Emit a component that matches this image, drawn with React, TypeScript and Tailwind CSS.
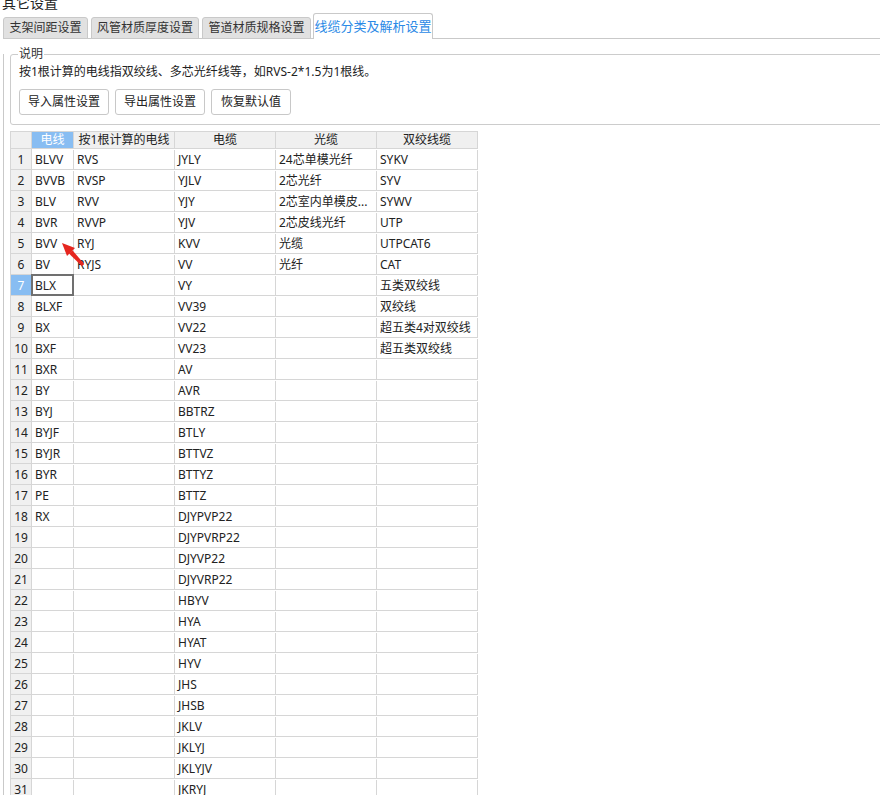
import React from 'react';

const col1 = ['BLVV', 'BVVB', 'BLV', 'BVR', 'BVV', 'BV', 'BLX', 'BLXF', 'BX', 'BXF', 'BXR', 'BY', 'BYJ', 'BYJF', 'BYJR', 'BYR', 'PE', 'RX'];
const col2 = ['RVS', 'RVSP', 'RVV', 'RVVP', 'RYJ', 'RYJS'];
const col3 = [
  'JYLY', 'YJLV', 'YJY', 'YJV', 'KVV', 'VV', 'VY', 'VV39', 'VV22', 'VV23', 'AV', 'AVR', 'BBTRZ', 'BTLY', 'BTTVZ', 'BTTYZ',
  'BTTZ', 'DJYPVP22', 'DJYPVRP22', 'DJYVP22', 'DJYVRP22', 'HBYV', 'HYA', 'HYAT', 'HYV', 'JHS', 'JHSB', 'JKLV', 'JKLYJ', 'JKLYJV', 'JKRYJ',
];
const col4 = ['24芯单模光纤', '2芯光纤', '2芯室内单模皮...', '2芯皮线光纤', '光缆', '光纤'];
const col5 = ['SYKV', 'SYV', 'SYWV', 'UTP', 'UTPCAT6', 'CAT', '五类双绞线', '双绞线', '超五类4对双绞线', '超五类双绞线'];

const tabs = [
  { label: '支架间距设置', cls: 'w-[85px]' },
  { label: '风管材质厚度设置', cls: 'w-[108px] ml-[3px]' },
  { label: '管道材质规格设置', cls: 'w-[109px] ml-[3px]' },
];

export default function App() {
  const rows = Array.from({ length: 32 }, (_, i) => i);

  return (
    <div className="relative w-[880px] h-[795px] overflow-hidden bg-white text-[#333] font-['Noto_Sans','Noto_Sans_CJK_SC',sans-serif]">
      {/* title, cut off by the top of the window */}
      <div className="mt-[-7px] h-[20px] pl-[2px] text-[14px] leading-[20px] text-[#222]">其它设置</div>

      {/* tab strip */}
      <div className="ml-[3px] flex h-[26px] w-[900px] items-end border-b border-[#c9c9c9]">
        {tabs.map((t) => (
          <div
            key={t.label}
            className={`${t.cls} -mb-px flex h-[22px] items-center justify-center whitespace-nowrap rounded-t-[3px] border border-[#c9c9c9] bg-[#e1e1e1] text-[12px] text-[#333]`}
          >
            {t.label}
          </div>
        ))}
        <div className="-mb-px ml-[2px] flex h-[26px] w-[120px] items-center justify-center whitespace-nowrap rounded-t-[3px] border border-b-0 border-[#c9c9c9] bg-white text-[13px] text-[#2b8ae6]">
          线缆分类及解析设置
        </div>
      </div>

      {/* panel */}
      <div className="ml-[3px] h-[760px] w-[900px] border-l border-[#c9c9c9]">
        {/* group box */}
        <div className="relative ml-[6px] mt-[15px] w-[890px] rounded-[3px] border border-[#cccccc] pb-[9px] pl-[8px] pt-[8px]">
          <div className="absolute left-[7px] top-[-10px] bg-white px-[1px] text-[12px] leading-[18px] text-[#333]">说明</div>
          <div className="h-[18px] text-[12px] leading-[18px] text-[#222]">按1根计算的电线指双绞线、多芯光纤线等，如RVS-2*1.5为1根线。</div>
          <div className="mt-[8px] flex gap-[6px]">
            <button className="h-[26px] w-[90px] rounded-[3px] border border-[#c8c8c8] bg-white text-[12px] text-[#222]">导入属性设置</button>
            <button className="h-[26px] w-[90px] rounded-[3px] border border-[#c8c8c8] bg-white text-[12px] text-[#222]">导出属性设置</button>
            <button className="h-[26px] w-[80px] rounded-[3px] border border-[#c8c8c8] bg-white text-[12px] text-[#222]">恢复默认值</button>
          </div>
        </div>

        {/* grid */}
        <div className="ml-[6px] mt-[6px] w-[468px] border-l border-t border-[#d6d6d6] text-[12px]">
          <div className="flex h-[17px] border-b border-[#d6d6d6] bg-[#f0f0f0] leading-[16px]">
            <div className="w-[21px] border-r border-[#d6d6d6]" />
            <div className="w-[42px] border-r border-[#d6d6d6] bg-[#88bdf2] text-center text-white">电线</div>
            <div className="w-[101px] border-r border-[#d6d6d6] text-center text-[#222]">按1根计算的电线</div>
            <div className="w-[101px] border-r border-[#d6d6d6] text-center text-[#222]">电缆</div>
            <div className="w-[101px] border-r border-[#d6d6d6] text-center text-[#222]">光缆</div>
            <div className="w-[101px] border-r border-[#d6d6d6] text-center text-[#222]">双绞线缆</div>
          </div>
          {rows.map((i) => (
            <div key={i} className="flex h-[21px] border-b border-[#d6d6d6] pt-px leading-[19px] text-[#222]">
              <div
                className={`-mt-px w-[21px] border-r border-[#d6d6d6] pt-px text-center ${i === 6 ? 'bg-[#88bdf2] text-white' : 'bg-[#f0f0f0]'}`}
              >
                {i + 1}
              </div>
              <div className="relative w-[42px] whitespace-nowrap border-r border-[#d6d6d6] pl-[3px]">
                {col1[i] ?? ''}
                {i === 6 && <div className="absolute inset-x-[-1px] bottom-[-1px] top-[-2px] border-2 border-[#707070]" />}
              </div>
              <div className="w-[101px] whitespace-nowrap border-r border-[#d6d6d6] pl-[3px]">{col2[i] ?? ''}</div>
              <div className="w-[101px] whitespace-nowrap border-r border-[#d6d6d6] pl-[3px]">{col3[i] ?? ''}</div>
              <div className="w-[101px] overflow-hidden whitespace-nowrap border-r border-[#d6d6d6] pl-[3px]">{col4[i] ?? ''}</div>
              <div className="w-[101px] overflow-hidden whitespace-nowrap border-r border-[#d6d6d6] pl-[3px]">{col5[i] ?? ''}</div>
            </div>
          ))}
        </div>
      </div>

      {/* red annotation arrow */}
      <svg className="pointer-events-none absolute left-[54px] top-[236px]" width="36" height="36" viewBox="0 0 36 36">
        <polygon points="30.2,28 28,30.2 15,17.6 18.4,14.2" fill="#e6261f" />
        <polygon points="8,7 21,12 13,20" fill="#e6261f" />
      </svg>
    </div>
  );
}
